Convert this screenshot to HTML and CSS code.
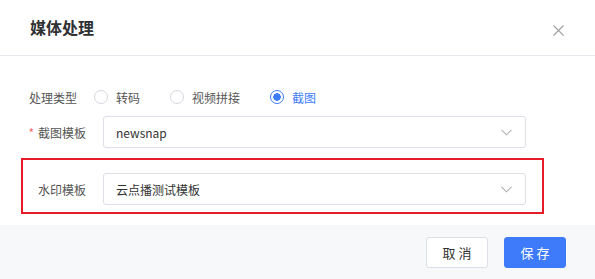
FILE: index.html
```html
<!DOCTYPE html>
<html lang="zh-CN">
<head>
  <meta charset="UTF-8">
  <meta name="viewport" content="width=device-width, initial-scale=1.0">
  <title>媒体处理</title>
  <link rel="stylesheet" href="styles.css">
</head>
<body>
  <div class="dialog">
    <div class="dialog-header">
      <div class="dialog-title">媒体处理</div>
      <button class="close-button">
        <svg width="11" height="11" viewBox="0 0 11 11"><path d="M0.5 0.5 L10.5 10.5 M10.5 0.5 L0.5 10.5" stroke="#a0a0a0" stroke-width="1.1" fill="none"/></svg>
      </button>
    </div>
    <div class="dialog-body">
      <div class="form-row type-row">
        <div class="type-label">处理类型</div>
        <div class="radio-group">
          <label class="radio"><span class="radio-circle"></span>转码</label>
          <label class="radio"><span class="radio-circle"></span>视频拼接</label>
          <label class="radio checked"><span class="radio-circle"></span>截图</label>
        </div>
      </div>
      <div class="form-row">
        <div class="form-label"><span class="required">*</span>截图模板</div>
        <div class="select">
          <span>newsnap</span>
          <svg class="chevron" width="11" height="7" viewBox="0 0 11 7"><path d="M0.5 0.8 L5.5 5.8 L10.5 0.8" stroke="#b0b0b0" stroke-width="1.1" fill="none"/></svg>
        </div>
      </div>
      <div class="highlight">
        <div class="form-row">
          <div class="form-label">水印模板</div>
          <div class="select">
            <span>云点播测试模板</span>
            <svg class="chevron" width="11" height="7" viewBox="0 0 11 7"><path d="M0.5 0.8 L5.5 5.8 L10.5 0.8" stroke="#b0b0b0" stroke-width="1.1" fill="none"/></svg>
          </div>
        </div>
      </div>
    </div>
    <div class="dialog-footer">
      <button class="btn btn-cancel">取消</button>
      <button class="btn btn-save">保存</button>
    </div>
  </div>
</body>
</html>
```

FILE: styles.css
```css
body {
  margin: 0;
  font-family: "Noto Sans CJK SC", "Noto Sans", sans-serif;
  font-size: 12px;
  color: #333;
  background-color: #fff;
}

.dialog {
  width: 595px;
  height: 279px;
  display: flex;
  flex-direction: column;
}

.dialog-header {
  height: 56px;
  display: flex;
  align-items: center;
  justify-content: space-between;
  padding: 0 31px 0 30px;
  border-bottom: 1px solid #e8e8ee;
}

.dialog-title {
  font-size: 16px;
  font-weight: bold;
  color: #303133;
  margin-top: -1px;
}

.close-button {
  background: none;
  border: none;
  padding: 0;
  margin-top: 6px;
  display: flex;
  cursor: pointer;
}

.dialog-body {
  flex: 1;
  padding: 29px 69px 11px 21px;
}

.form-row {
  display: flex;
  align-items: center;
  padding-left: 8px;
}

.type-row {
  height: 24px;
  margin-bottom: 7px;
}

.type-label {
  width: 65px;
  color: #555;
}

.radio-group {
  display: flex;
  gap: 30px;
}

.radio {
  display: flex;
  align-items: center;
  gap: 8px;
  color: #555;
}

.radio-circle {
  width: 12px;
  height: 12px;
  border: 1px solid #d4d7de;
  border-radius: 50%;
  box-sizing: content-box;
}

.radio.checked {
  color: #3e7bfa;
}

.radio.checked .radio-circle {
  border-color: #3e7bfa;
  background: radial-gradient(circle, #3e7bfa 0, #3e7bfa 3.5px, #fff 4px);
}

.form-label {
  width: 74px;
  flex-shrink: 0;
  padding-right: 17px;
  box-sizing: border-box;
  display: flex;
  justify-content: flex-end;
  white-space: nowrap;
  color: #555;
}

.required {
  color: #f56c6c;
  margin-right: 4px;
}

.select {
  flex: 1;
  height: 32px;
  box-sizing: border-box;
  border: 1px solid #dcdfe6;
  border-radius: 3px;
  padding: 0 13px 0 12px;
  display: flex;
  align-items: center;
  justify-content: space-between;
  color: #333;
}

.chevron {
  margin-top: 1px;
}

.highlight {
  margin-top: 10px;
  border: 2px solid #e51c25;
  padding: 13px 16px 7px 0;
  margin-right: -18px;
}

.highlight .form-row {
  padding-left: 6px;
}

.dialog-footer {
  height: 54px;
  background-color: #f7f8fa;
  display: flex;
  align-items: center;
  justify-content: flex-end;
  gap: 16px;
  padding: 0 29px;
}

.btn {
  width: 62px;
  height: 31px;
  border-radius: 3px;
  font-family: inherit;
  font-size: 13px;
  letter-spacing: 3px;
  text-indent: 3px;
  cursor: pointer;
}

.btn-cancel {
  background-color: #fff;
  border: 1px solid #dcdfe6;
  color: #333;
}

.btn-save {
  background-color: #3e7bfa;
  border: 1px solid #3e7bfa;
  color: #fff;
}
```
